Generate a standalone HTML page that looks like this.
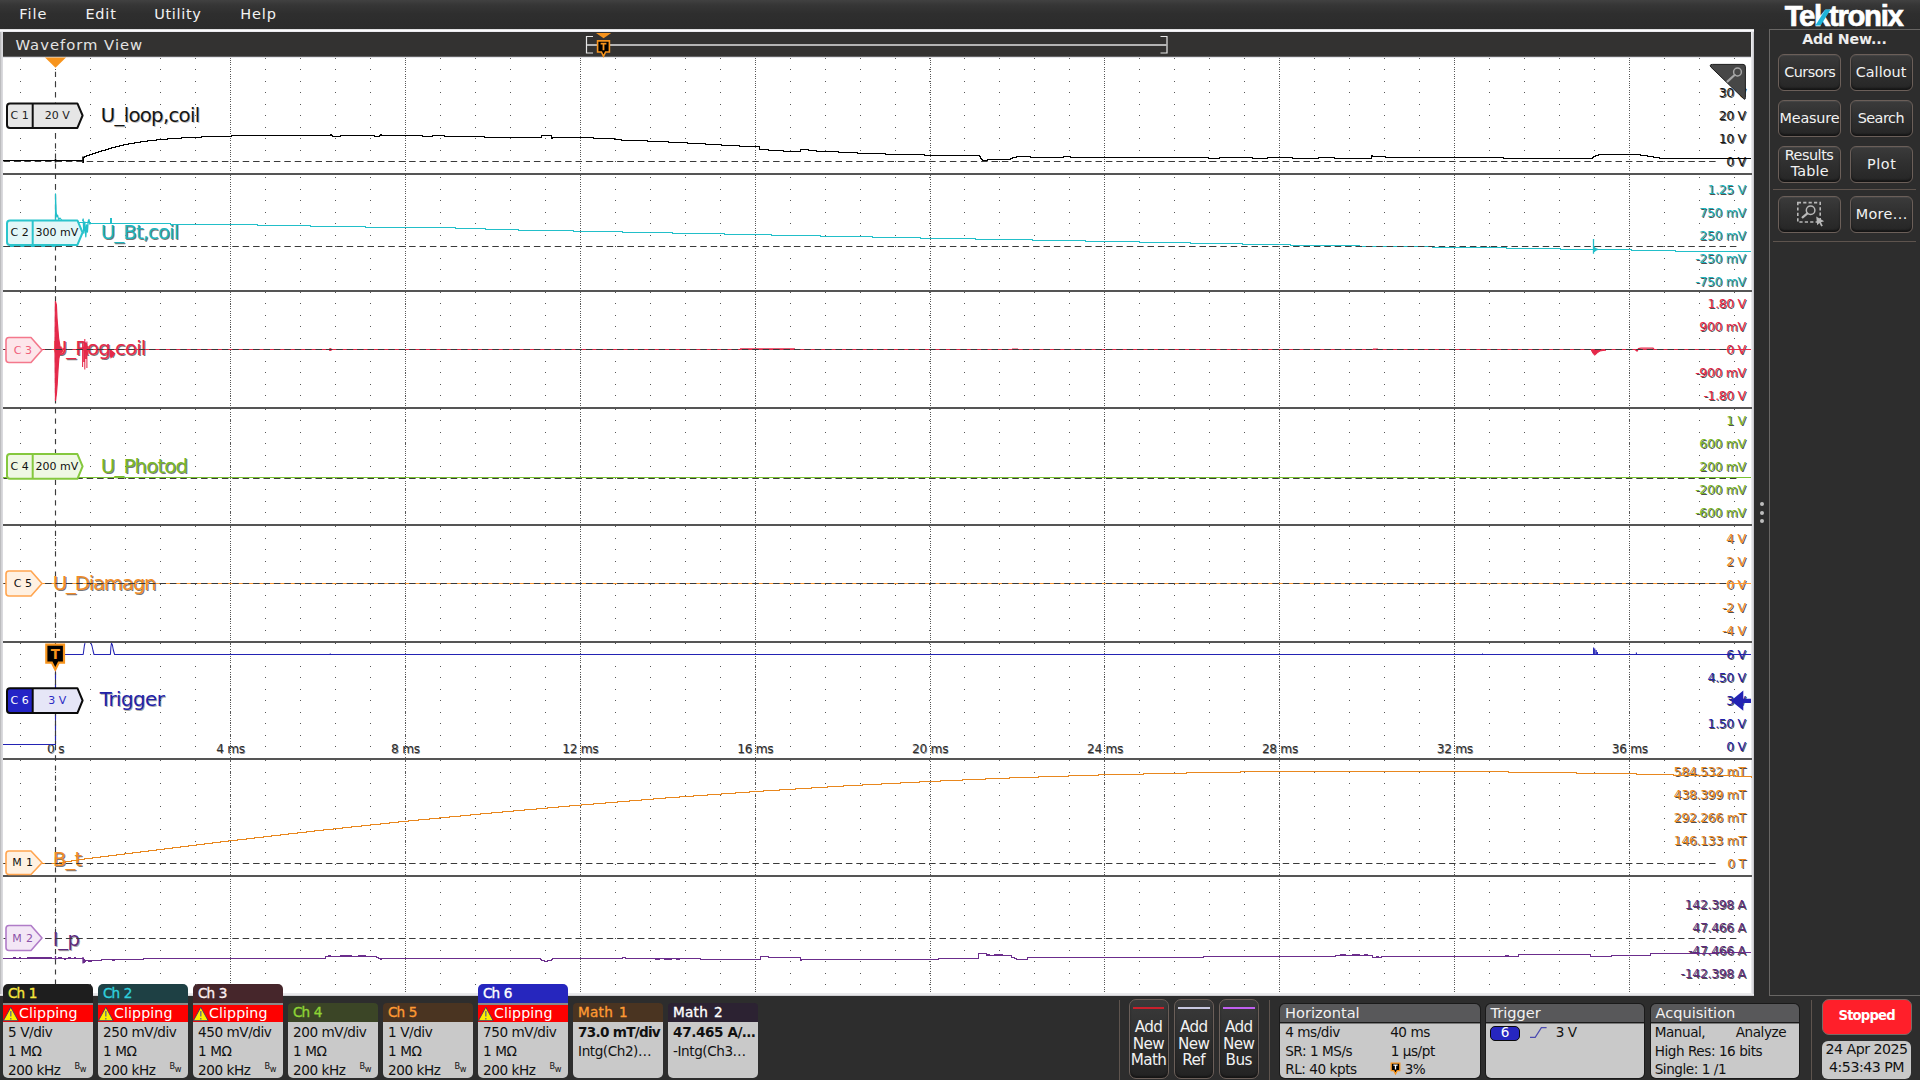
<!DOCTYPE html>
<html lang="en"><head><meta charset="utf-8"><title>Tektronix Waveform View</title>
<style>
html,body{margin:0;padding:0}
body{width:1920px;height:1080px;overflow:hidden;background:#2d2d2d;position:relative;font-family:"DejaVu Sans","Liberation Sans",sans-serif;}
#app{position:absolute;left:0;top:0;width:1920px;height:1080px;overflow:hidden;background:#2d2d2d}
#app div{position:absolute}
.t{position:absolute;white-space:pre;line-height:1}
svg.layer{position:absolute;left:0;top:0}
#menubar{left:0;top:0;width:1920px;height:29px;background:linear-gradient(#414141 0,#363636 5px,#2e2e2e 14px,#2c2c2c 100%)}
#wvframe{left:0;top:29px;width:1754.3px;height:967px;background:linear-gradient(#cfcfd1 0,#fdfdfd 1.3px,#e4e4ea 3px,#e0e0e4 964px,#f4f4f6 965px,#c4c4c8 967px)}
#wvl{left:0;top:32px;width:3px;height:962px;background:linear-gradient(90deg,#a9a9ab 0,#cfcfd2 1px,#dedee2 3px)}
#wvr{left:1751px;top:32px;width:3.3px;height:962px;background:linear-gradient(90deg,#f0f0f2 0,#dcdce0 1.6px,#b8b8bc 3.3px)}
#wvtitle{left:3px;top:32px;width:1748px;height:24.3px;background:#333231;border-bottom:1.5px solid #626262}
#wvgrid{left:3px;top:57.7px;width:1748px;height:935.6px;background:#fff}
#rpanel{left:1769px;top:29px;width:160px;height:967.3px;border:1px solid #686664;box-sizing:border-box}
</style></head>
<body><div id="app">
<div id="menubar"></div>
<div id="wvframe"></div><div id="wvl"></div><div id="wvr"></div><div id="wvtitle"></div><div id="wvgrid"></div>
<div id="rpanel"></div>
<svg class="layer" width="1920" height="1080" viewBox="0 0 1920 1080">
<path d="M20 58.5H1751" stroke="#585858" stroke-width="1" stroke-dasharray="1 33.98" shape-rendering="crispEdges"/>
<path d="M20 69.5H1751" stroke="#585858" stroke-width="1" stroke-dasharray="1 33.98" shape-rendering="crispEdges"/>
<path d="M20 81.5H1751" stroke="#585858" stroke-width="1" stroke-dasharray="1 33.98" shape-rendering="crispEdges"/>
<path d="M20 92.5H1751" stroke="#585858" stroke-width="1" stroke-dasharray="1 33.98" shape-rendering="crispEdges"/>
<path d="M20 104.5H1751" stroke="#585858" stroke-width="1" stroke-dasharray="1 33.98" shape-rendering="crispEdges"/>
<path d="M20 115.5H1751" stroke="#585858" stroke-width="1" stroke-dasharray="1 33.98" shape-rendering="crispEdges"/>
<path d="M20 127.5H1751" stroke="#585858" stroke-width="1" stroke-dasharray="1 33.98" shape-rendering="crispEdges"/>
<path d="M20 138.5H1751" stroke="#585858" stroke-width="1" stroke-dasharray="1 33.98" shape-rendering="crispEdges"/>
<path d="M20 150.5H1751" stroke="#585858" stroke-width="1" stroke-dasharray="1 33.98" shape-rendering="crispEdges"/>
<path d="M20 161.5H1751" stroke="#585858" stroke-width="1" stroke-dasharray="1 33.98" shape-rendering="crispEdges"/>
<path d="M20 177.5H1751" stroke="#585858" stroke-width="1" stroke-dasharray="1 33.98" shape-rendering="crispEdges"/>
<path d="M20 189.5H1751" stroke="#585858" stroke-width="1" stroke-dasharray="1 33.98" shape-rendering="crispEdges"/>
<path d="M20 200.5H1751" stroke="#585858" stroke-width="1" stroke-dasharray="1 33.98" shape-rendering="crispEdges"/>
<path d="M20 212.5H1751" stroke="#585858" stroke-width="1" stroke-dasharray="1 33.98" shape-rendering="crispEdges"/>
<path d="M20 223.5H1751" stroke="#585858" stroke-width="1" stroke-dasharray="1 33.98" shape-rendering="crispEdges"/>
<path d="M20 235.5H1751" stroke="#585858" stroke-width="1" stroke-dasharray="1 33.98" shape-rendering="crispEdges"/>
<path d="M20 246.5H1751" stroke="#585858" stroke-width="1" stroke-dasharray="1 33.98" shape-rendering="crispEdges"/>
<path d="M20 258.5H1751" stroke="#585858" stroke-width="1" stroke-dasharray="1 33.98" shape-rendering="crispEdges"/>
<path d="M20 269.5H1751" stroke="#585858" stroke-width="1" stroke-dasharray="1 33.98" shape-rendering="crispEdges"/>
<path d="M20 281.5H1751" stroke="#585858" stroke-width="1" stroke-dasharray="1 33.98" shape-rendering="crispEdges"/>
<path d="M20 292.5H1751" stroke="#585858" stroke-width="1" stroke-dasharray="1 33.98" shape-rendering="crispEdges"/>
<path d="M20 303.5H1751" stroke="#585858" stroke-width="1" stroke-dasharray="1 33.98" shape-rendering="crispEdges"/>
<path d="M20 315.5H1751" stroke="#585858" stroke-width="1" stroke-dasharray="1 33.98" shape-rendering="crispEdges"/>
<path d="M20 326.5H1751" stroke="#585858" stroke-width="1" stroke-dasharray="1 33.98" shape-rendering="crispEdges"/>
<path d="M20 338.5H1751" stroke="#585858" stroke-width="1" stroke-dasharray="1 33.98" shape-rendering="crispEdges"/>
<path d="M20 349.5H1751" stroke="#585858" stroke-width="1" stroke-dasharray="1 33.98" shape-rendering="crispEdges"/>
<path d="M20 361.5H1751" stroke="#585858" stroke-width="1" stroke-dasharray="1 33.98" shape-rendering="crispEdges"/>
<path d="M20 372.5H1751" stroke="#585858" stroke-width="1" stroke-dasharray="1 33.98" shape-rendering="crispEdges"/>
<path d="M20 384.5H1751" stroke="#585858" stroke-width="1" stroke-dasharray="1 33.98" shape-rendering="crispEdges"/>
<path d="M20 395.5H1751" stroke="#585858" stroke-width="1" stroke-dasharray="1 33.98" shape-rendering="crispEdges"/>
<path d="M20 409.5H1751" stroke="#585858" stroke-width="1" stroke-dasharray="1 33.98" shape-rendering="crispEdges"/>
<path d="M20 420.5H1751" stroke="#585858" stroke-width="1" stroke-dasharray="1 33.98" shape-rendering="crispEdges"/>
<path d="M20 432.5H1751" stroke="#585858" stroke-width="1" stroke-dasharray="1 33.98" shape-rendering="crispEdges"/>
<path d="M20 443.5H1751" stroke="#585858" stroke-width="1" stroke-dasharray="1 33.98" shape-rendering="crispEdges"/>
<path d="M20 455.5H1751" stroke="#585858" stroke-width="1" stroke-dasharray="1 33.98" shape-rendering="crispEdges"/>
<path d="M20 466.5H1751" stroke="#585858" stroke-width="1" stroke-dasharray="1 33.98" shape-rendering="crispEdges"/>
<path d="M20 478.5H1751" stroke="#585858" stroke-width="1" stroke-dasharray="1 33.98" shape-rendering="crispEdges"/>
<path d="M20 489.5H1751" stroke="#585858" stroke-width="1" stroke-dasharray="1 33.98" shape-rendering="crispEdges"/>
<path d="M20 501.5H1751" stroke="#585858" stroke-width="1" stroke-dasharray="1 33.98" shape-rendering="crispEdges"/>
<path d="M20 512.5H1751" stroke="#585858" stroke-width="1" stroke-dasharray="1 33.98" shape-rendering="crispEdges"/>
<path d="M20 526.5H1751" stroke="#585858" stroke-width="1" stroke-dasharray="1 33.98" shape-rendering="crispEdges"/>
<path d="M20 538.5H1751" stroke="#585858" stroke-width="1" stroke-dasharray="1 33.98" shape-rendering="crispEdges"/>
<path d="M20 549.5H1751" stroke="#585858" stroke-width="1" stroke-dasharray="1 33.98" shape-rendering="crispEdges"/>
<path d="M20 561.5H1751" stroke="#585858" stroke-width="1" stroke-dasharray="1 33.98" shape-rendering="crispEdges"/>
<path d="M20 572.5H1751" stroke="#585858" stroke-width="1" stroke-dasharray="1 33.98" shape-rendering="crispEdges"/>
<path d="M20 584.5H1751" stroke="#585858" stroke-width="1" stroke-dasharray="1 33.98" shape-rendering="crispEdges"/>
<path d="M20 595.5H1751" stroke="#585858" stroke-width="1" stroke-dasharray="1 33.98" shape-rendering="crispEdges"/>
<path d="M20 607.5H1751" stroke="#585858" stroke-width="1" stroke-dasharray="1 33.98" shape-rendering="crispEdges"/>
<path d="M20 618.5H1751" stroke="#585858" stroke-width="1" stroke-dasharray="1 33.98" shape-rendering="crispEdges"/>
<path d="M20 630.5H1751" stroke="#585858" stroke-width="1" stroke-dasharray="1 33.98" shape-rendering="crispEdges"/>
<path d="M20 643.5H1751" stroke="#585858" stroke-width="1" stroke-dasharray="1 33.98" shape-rendering="crispEdges"/>
<path d="M20 654.5H1751" stroke="#585858" stroke-width="1" stroke-dasharray="1 33.98" shape-rendering="crispEdges"/>
<path d="M20 666.5H1751" stroke="#585858" stroke-width="1" stroke-dasharray="1 33.98" shape-rendering="crispEdges"/>
<path d="M20 677.5H1751" stroke="#585858" stroke-width="1" stroke-dasharray="1 33.98" shape-rendering="crispEdges"/>
<path d="M20 689.5H1751" stroke="#585858" stroke-width="1" stroke-dasharray="1 33.98" shape-rendering="crispEdges"/>
<path d="M20 700.5H1751" stroke="#585858" stroke-width="1" stroke-dasharray="1 33.98" shape-rendering="crispEdges"/>
<path d="M20 712.5H1751" stroke="#585858" stroke-width="1" stroke-dasharray="1 33.98" shape-rendering="crispEdges"/>
<path d="M20 723.5H1751" stroke="#585858" stroke-width="1" stroke-dasharray="1 33.98" shape-rendering="crispEdges"/>
<path d="M20 735.5H1751" stroke="#585858" stroke-width="1" stroke-dasharray="1 33.98" shape-rendering="crispEdges"/>
<path d="M20 746.5H1751" stroke="#585858" stroke-width="1" stroke-dasharray="1 33.98" shape-rendering="crispEdges"/>
<path d="M20 760.5H1751" stroke="#585858" stroke-width="1" stroke-dasharray="1 33.98" shape-rendering="crispEdges"/>
<path d="M20 772.5H1751" stroke="#585858" stroke-width="1" stroke-dasharray="1 33.98" shape-rendering="crispEdges"/>
<path d="M20 783.5H1751" stroke="#585858" stroke-width="1" stroke-dasharray="1 33.98" shape-rendering="crispEdges"/>
<path d="M20 795.5H1751" stroke="#585858" stroke-width="1" stroke-dasharray="1 33.98" shape-rendering="crispEdges"/>
<path d="M20 806.5H1751" stroke="#585858" stroke-width="1" stroke-dasharray="1 33.98" shape-rendering="crispEdges"/>
<path d="M20 818.5H1751" stroke="#585858" stroke-width="1" stroke-dasharray="1 33.98" shape-rendering="crispEdges"/>
<path d="M20 829.5H1751" stroke="#585858" stroke-width="1" stroke-dasharray="1 33.98" shape-rendering="crispEdges"/>
<path d="M20 841.5H1751" stroke="#585858" stroke-width="1" stroke-dasharray="1 33.98" shape-rendering="crispEdges"/>
<path d="M20 852.5H1751" stroke="#585858" stroke-width="1" stroke-dasharray="1 33.98" shape-rendering="crispEdges"/>
<path d="M20 864.5H1751" stroke="#585858" stroke-width="1" stroke-dasharray="1 33.98" shape-rendering="crispEdges"/>
<path d="M20 881.5H1751" stroke="#585858" stroke-width="1" stroke-dasharray="1 33.98" shape-rendering="crispEdges"/>
<path d="M20 892.5H1751" stroke="#585858" stroke-width="1" stroke-dasharray="1 33.98" shape-rendering="crispEdges"/>
<path d="M20 904.5H1751" stroke="#585858" stroke-width="1" stroke-dasharray="1 33.98" shape-rendering="crispEdges"/>
<path d="M20 915.5H1751" stroke="#585858" stroke-width="1" stroke-dasharray="1 33.98" shape-rendering="crispEdges"/>
<path d="M20 927.5H1751" stroke="#585858" stroke-width="1" stroke-dasharray="1 33.98" shape-rendering="crispEdges"/>
<path d="M20 938.5H1751" stroke="#585858" stroke-width="1" stroke-dasharray="1 33.98" shape-rendering="crispEdges"/>
<path d="M20 950.5H1751" stroke="#585858" stroke-width="1" stroke-dasharray="1 33.98" shape-rendering="crispEdges"/>
<path d="M20 961.5H1751" stroke="#585858" stroke-width="1" stroke-dasharray="1 33.98" shape-rendering="crispEdges"/>
<path d="M20 973.5H1751" stroke="#585858" stroke-width="1" stroke-dasharray="1 33.98" shape-rendering="crispEdges"/>
<path d="M20 984.5H1751" stroke="#585858" stroke-width="1" stroke-dasharray="1 33.98" shape-rendering="crispEdges"/>
<path d="M230.40 57.5V993.5" stroke="#585858" stroke-width="1" stroke-dasharray="1 1.3" shape-rendering="crispEdges"/>
<path d="M405.30 57.5V993.5" stroke="#585858" stroke-width="1" stroke-dasharray="1 1.3" shape-rendering="crispEdges"/>
<path d="M580.20 57.5V993.5" stroke="#585858" stroke-width="1" stroke-dasharray="1 1.3" shape-rendering="crispEdges"/>
<path d="M755.10 57.5V993.5" stroke="#585858" stroke-width="1" stroke-dasharray="1 1.3" shape-rendering="crispEdges"/>
<path d="M930.00 57.5V993.5" stroke="#585858" stroke-width="1" stroke-dasharray="1 1.3" shape-rendering="crispEdges"/>
<path d="M1104.90 57.5V993.5" stroke="#585858" stroke-width="1" stroke-dasharray="1 1.3" shape-rendering="crispEdges"/>
<path d="M1279.80 57.5V993.5" stroke="#585858" stroke-width="1" stroke-dasharray="1 1.3" shape-rendering="crispEdges"/>
<path d="M1454.70 57.5V993.5" stroke="#585858" stroke-width="1" stroke-dasharray="1 1.3" shape-rendering="crispEdges"/>
<path d="M1629.60 57.5V993.5" stroke="#585858" stroke-width="1" stroke-dasharray="1 1.3" shape-rendering="crispEdges"/>
<rect x="3" y="173" width="1749" height="2" fill="#555"/>
<rect x="3" y="290" width="1749" height="2" fill="#555"/>
<rect x="3" y="407" width="1749" height="2" fill="#555"/>
<rect x="3" y="524" width="1749" height="2" fill="#555"/>
<rect x="3" y="641" width="1749" height="2" fill="#555"/>
<rect x="3" y="758" width="1749" height="2" fill="#555"/>
<rect x="3" y="875" width="1749" height="2" fill="#555"/>
<path d="M55.5 67.6V993" stroke="#3c3c3c" stroke-width="1.15" stroke-dasharray="5.2 5" stroke-dashoffset="6"/>
</svg>
<span class="t" style="left:100.81px;top:105.50px;font-size:19.8px;color:#151515;letter-spacing:-0.751px;text-shadow:1px 1px 0 rgba(0,0,0,.25);">U_loop,coil</span>
<span class="t" style="left:100.81px;top:222.75px;font-size:19.8px;color:#1fb5bd;letter-spacing:-0.949px;text-shadow:1px 1px 0 rgba(0,0,0,.55);">U_Bt,coil</span>
<span class="t" style="left:52.81px;top:339.00px;font-size:19.8px;color:#e5294a;letter-spacing:-0.976px;text-shadow:1px 1px 0 rgba(0,0,0,.55);">U_Rog,coil</span>
<span class="t" style="left:100.81px;top:456.50px;font-size:19.8px;color:#78b82a;letter-spacing:-0.855px;text-shadow:1px 1px 0 rgba(0,0,0,.55);">U_Photod</span>
<span class="t" style="left:52.81px;top:574.00px;font-size:19.8px;color:#f08c28;letter-spacing:-1.230px;text-shadow:1px 1px 0 rgba(0,0,0,.55);">U_Diamagn</span>
<span class="t" style="left:99.81px;top:690.00px;font-size:19.8px;color:#2222a8;letter-spacing:-0.526px;text-shadow:1px 1px 0 rgba(0,0,0,.35);">Trigger</span>
<span class="t" style="left:52.81px;top:849.75px;font-size:19.8px;color:#f08c28;letter-spacing:-0.921px;text-shadow:1px 1px 0 rgba(0,0,0,.55);">B_t</span>
<span class="t" style="left:52.81px;top:930.00px;font-size:19.8px;color:#5c2a7c;letter-spacing:-0.453px;text-shadow:1px 1px 0 rgba(0,0,0,.35);">I_p</span>
<span class="t" style="left:1718.76px;top:86.95px;font-size:12.5px;color:#151515;letter-spacing:-0.350px;text-shadow:1px 1px 0 rgba(0,0,0,.7);background:#fff;">30 V</span>
<span class="t" style="left:1718.76px;top:109.95px;font-size:12.5px;color:#151515;letter-spacing:-0.350px;text-shadow:1px 1px 0 rgba(0,0,0,.7);background:#fff;">20 V</span>
<span class="t" style="left:1718.76px;top:132.95px;font-size:12.5px;color:#151515;letter-spacing:-0.350px;text-shadow:1px 1px 0 rgba(0,0,0,.7);background:#fff;">10 V</span>
<span class="t" style="left:1726.37px;top:155.95px;font-size:12.5px;color:#151515;letter-spacing:-0.350px;text-shadow:1px 1px 0 rgba(0,0,0,.7);background:#fff;">0 V</span>
<span class="t" style="left:1707.54px;top:183.70px;font-size:12.5px;color:#1fb5bd;letter-spacing:-0.350px;text-shadow:1px 1px 0 rgba(0,0,0,.7);background:#fff;">1.25 V</span>
<span class="t" style="left:1699.34px;top:206.70px;font-size:12.5px;color:#1fb5bd;letter-spacing:-0.350px;text-shadow:1px 1px 0 rgba(0,0,0,.7);background:#fff;">750 mV</span>
<span class="t" style="left:1699.34px;top:229.70px;font-size:12.5px;color:#1fb5bd;letter-spacing:-0.350px;text-shadow:1px 1px 0 rgba(0,0,0,.7);background:#fff;">250 mV</span>
<span class="t" style="left:1695.17px;top:252.70px;font-size:12.5px;color:#1fb5bd;letter-spacing:-0.350px;text-shadow:1px 1px 0 rgba(0,0,0,.7);background:#fff;">-250 mV</span>
<span class="t" style="left:1695.17px;top:275.70px;font-size:12.5px;color:#1fb5bd;letter-spacing:-0.350px;text-shadow:1px 1px 0 rgba(0,0,0,.7);background:#fff;">-750 mV</span>
<span class="t" style="left:1707.54px;top:298.20px;font-size:12.5px;color:#e5294a;letter-spacing:-0.350px;text-shadow:1px 1px 0 rgba(0,0,0,.7);background:#fff;">1.80 V</span>
<span class="t" style="left:1699.34px;top:321.20px;font-size:12.5px;color:#e5294a;letter-spacing:-0.350px;text-shadow:1px 1px 0 rgba(0,0,0,.7);background:#fff;">900 mV</span>
<span class="t" style="left:1726.37px;top:344.20px;font-size:12.5px;color:#e5294a;letter-spacing:-0.350px;text-shadow:1px 1px 0 rgba(0,0,0,.7);background:#fff;">0 V</span>
<span class="t" style="left:1695.17px;top:367.20px;font-size:12.5px;color:#e5294a;letter-spacing:-0.350px;text-shadow:1px 1px 0 rgba(0,0,0,.7);background:#fff;">-900 mV</span>
<span class="t" style="left:1703.38px;top:390.20px;font-size:12.5px;color:#e5294a;letter-spacing:-0.350px;text-shadow:1px 1px 0 rgba(0,0,0,.7);background:#fff;">-1.80 V</span>
<span class="t" style="left:1726.37px;top:415.20px;font-size:12.5px;color:#7ab82a;letter-spacing:-0.350px;text-shadow:1px 1px 0 rgba(0,0,0,.7);background:#fff;">1 V</span>
<span class="t" style="left:1699.34px;top:438.20px;font-size:12.5px;color:#7ab82a;letter-spacing:-0.350px;text-shadow:1px 1px 0 rgba(0,0,0,.7);background:#fff;">600 mV</span>
<span class="t" style="left:1699.34px;top:461.20px;font-size:12.5px;color:#7ab82a;letter-spacing:-0.350px;text-shadow:1px 1px 0 rgba(0,0,0,.7);background:#fff;">200 mV</span>
<span class="t" style="left:1695.17px;top:484.20px;font-size:12.5px;color:#7ab82a;letter-spacing:-0.350px;text-shadow:1px 1px 0 rgba(0,0,0,.7);background:#fff;">-200 mV</span>
<span class="t" style="left:1695.17px;top:507.20px;font-size:12.5px;color:#7ab82a;letter-spacing:-0.350px;text-shadow:1px 1px 0 rgba(0,0,0,.7);background:#fff;">-600 mV</span>
<span class="t" style="left:1726.37px;top:533.10px;font-size:12.5px;color:#f08c28;letter-spacing:-0.350px;text-shadow:1px 1px 0 rgba(0,0,0,.7);background:#fff;">4 V</span>
<span class="t" style="left:1726.37px;top:556.10px;font-size:12.5px;color:#f08c28;letter-spacing:-0.350px;text-shadow:1px 1px 0 rgba(0,0,0,.7);background:#fff;">2 V</span>
<span class="t" style="left:1726.37px;top:579.10px;font-size:12.5px;color:#f08c28;letter-spacing:-0.350px;text-shadow:1px 1px 0 rgba(0,0,0,.7);background:#fff;">0 V</span>
<span class="t" style="left:1722.20px;top:602.10px;font-size:12.5px;color:#f08c28;letter-spacing:-0.350px;text-shadow:1px 1px 0 rgba(0,0,0,.7);background:#fff;">-2 V</span>
<span class="t" style="left:1722.20px;top:625.10px;font-size:12.5px;color:#f08c28;letter-spacing:-0.350px;text-shadow:1px 1px 0 rgba(0,0,0,.7);background:#fff;">-4 V</span>
<span class="t" style="left:1726.37px;top:649.30px;font-size:12.5px;color:#2222a8;letter-spacing:-0.350px;text-shadow:1px 1px 0 rgba(0,0,0,.7);background:#fff;">6 V</span>
<span class="t" style="left:1707.54px;top:672.30px;font-size:12.5px;color:#2222a8;letter-spacing:-0.350px;text-shadow:1px 1px 0 rgba(0,0,0,.7);background:#fff;">4.50 V</span>
<span class="t" style="left:1726.37px;top:695.30px;font-size:12.5px;color:#2222a8;letter-spacing:-0.350px;text-shadow:1px 1px 0 rgba(0,0,0,.7);background:#fff;">3 V</span>
<span class="t" style="left:1707.54px;top:718.30px;font-size:12.5px;color:#2222a8;letter-spacing:-0.350px;text-shadow:1px 1px 0 rgba(0,0,0,.7);background:#fff;">1.50 V</span>
<span class="t" style="left:1726.37px;top:741.30px;font-size:12.5px;color:#2222a8;letter-spacing:-0.350px;text-shadow:1px 1px 0 rgba(0,0,0,.7);background:#fff;">0 V</span>
<span class="t" style="left:1673.82px;top:766.45px;font-size:12.5px;color:#e8871e;letter-spacing:-0.350px;text-shadow:1px 1px 0 rgba(0,0,0,.7);background:#fff;">584.532 mT</span>
<span class="t" style="left:1673.82px;top:789.45px;font-size:12.5px;color:#e8871e;letter-spacing:-0.350px;text-shadow:1px 1px 0 rgba(0,0,0,.7);background:#fff;">438.399 mT</span>
<span class="t" style="left:1673.82px;top:812.45px;font-size:12.5px;color:#e8871e;letter-spacing:-0.350px;text-shadow:1px 1px 0 rgba(0,0,0,.7);background:#fff;">292.266 mT</span>
<span class="t" style="left:1673.82px;top:835.45px;font-size:12.5px;color:#e8871e;letter-spacing:-0.350px;text-shadow:1px 1px 0 rgba(0,0,0,.7);background:#fff;">146.133 mT</span>
<span class="t" style="left:1727.29px;top:858.45px;font-size:12.5px;color:#e8871e;letter-spacing:-0.350px;text-shadow:1px 1px 0 rgba(0,0,0,.7);background:#fff;">0 T</span>
<span class="t" style="left:1684.73px;top:899.45px;font-size:12.5px;color:#5c2a7c;letter-spacing:-0.350px;text-shadow:1px 1px 0 rgba(0,0,0,.7);background:#fff;">142.398 A</span>
<span class="t" style="left:1692.33px;top:922.45px;font-size:12.5px;color:#5c2a7c;letter-spacing:-0.350px;text-shadow:1px 1px 0 rgba(0,0,0,.7);background:#fff;">47.466 A</span>
<span class="t" style="left:1688.17px;top:945.45px;font-size:12.5px;color:#5c2a7c;letter-spacing:-0.350px;text-shadow:1px 1px 0 rgba(0,0,0,.7);background:#fff;">-47.466 A</span>
<span class="t" style="left:1680.57px;top:968.45px;font-size:12.5px;color:#5c2a7c;letter-spacing:-0.350px;text-shadow:1px 1px 0 rgba(0,0,0,.7);background:#fff;">-142.398 A</span>
<span class="t" style="left:47.11px;top:742.50px;font-size:12.2px;color:#2e2e2e;letter-spacing:-0.300px;text-shadow:0.6px 0.6px 0 rgba(0,0,0,.45);">0 s</span>
<span class="t" style="left:216.22px;top:742.50px;font-size:12.2px;color:#2e2e2e;letter-spacing:-0.300px;text-shadow:0.6px 0.6px 0 rgba(0,0,0,.45);">4 ms</span>
<span class="t" style="left:391.12px;top:742.50px;font-size:12.2px;color:#2e2e2e;letter-spacing:-0.300px;text-shadow:0.6px 0.6px 0 rgba(0,0,0,.45);">8 ms</span>
<span class="t" style="left:562.30px;top:742.50px;font-size:12.2px;color:#2e2e2e;letter-spacing:-0.300px;text-shadow:0.6px 0.6px 0 rgba(0,0,0,.45);">12 ms</span>
<span class="t" style="left:737.20px;top:742.50px;font-size:12.2px;color:#2e2e2e;letter-spacing:-0.300px;text-shadow:0.6px 0.6px 0 rgba(0,0,0,.45);">16 ms</span>
<span class="t" style="left:912.10px;top:742.50px;font-size:12.2px;color:#2e2e2e;letter-spacing:-0.300px;text-shadow:0.6px 0.6px 0 rgba(0,0,0,.45);">20 ms</span>
<span class="t" style="left:1087.00px;top:742.50px;font-size:12.2px;color:#2e2e2e;letter-spacing:-0.300px;text-shadow:0.6px 0.6px 0 rgba(0,0,0,.45);">24 ms</span>
<span class="t" style="left:1261.90px;top:742.50px;font-size:12.2px;color:#2e2e2e;letter-spacing:-0.300px;text-shadow:0.6px 0.6px 0 rgba(0,0,0,.45);">28 ms</span>
<span class="t" style="left:1436.80px;top:742.50px;font-size:12.2px;color:#2e2e2e;letter-spacing:-0.300px;text-shadow:0.6px 0.6px 0 rgba(0,0,0,.45);">32 ms</span>
<span class="t" style="left:1611.70px;top:742.50px;font-size:12.2px;color:#2e2e2e;letter-spacing:-0.300px;text-shadow:0.6px 0.6px 0 rgba(0,0,0,.45);">36 ms</span>
<svg class="layer" width="1920" height="1080" viewBox="0 0 1920 1080">
<path d="M3.0 160.50H83.0V162.50H83.5V157.50H84.6V156.50H86.9V155.50H89.0V154.50H92.0V153.50H95.0V152.50H98.0V151.50H101.0V150.50H105.0V149.50H108.0V148.50H111.0V147.50H115.0V146.50H119.0V145.50H123.0V144.50H128.0V143.50H134.0V142.50H140.0V141.50H147.0V140.50H156.0V139.50H167.0V138.50H181.0V137.50H201.0V136.50H231.0V135.50H330.0V134.50H331.0V135.50H332.0V136.50H340.0V135.50H374.0V136.50H379.0V135.50H380.0V134.50H381.0V135.50H422.0V136.50H432.0V135.50H444.0V136.50H484.0V137.50H541.0V135.50H551.0V138.50H552.0V137.50H593.0V138.50H614.0V139.50H621.0V140.50H647.0V141.50H668.0V142.50H687.0V143.50H705.0V144.50H721.0V145.50H739.0V146.50H759.5V149.50H768.8V150.50H783.0V151.50H800.0V149.50H808.0V150.50H816.0V151.50H838.0V152.50H857.0V153.50H885.0V154.50H924.0V155.50H979.0V156.50H980.0V158.50H981.0V159.50H982.0V160.50H987.0V159.50H1010.0V158.50H1012.0V157.50H1016.0V156.50H1030.0V157.50H1063.0V156.50H1070.0V157.50H1208.0V158.50H1219.0V157.50H1252.0V158.50H1267.0V157.50H1292.0V158.50H1318.0V157.50H1334.0V158.50H1371.0V155.50H1372.0V156.50H1385.0V157.50H1503.0V158.50H1592.0V157.50H1593.0V156.50H1595.0V155.50H1598.0V154.50H1640.0V155.50H1647.0V156.50H1653.0V157.50H1659.3V158.50H1751.0" fill="none" stroke="#000" stroke-width="1" shape-rendering="crispEdges"/>
<path d="M55.5 158.8V162.4M83 156.5V163" stroke="#000" stroke-width="1.6"/>
<path d="M3 246.5H55" fill="none" stroke="#22bfc9" stroke-width="1.1"/>
<path d="M58.0 220.50H66.0V221.50H78.0V222.50H90.0V223.50H110.0V218.50H111.0V223.50H170.0V224.50H257.0V225.50H310.0V226.50H365.0V227.50H455.0V228.50H485.0V229.50H518.0V230.50H573.0V231.50H622.0V232.50H672.0V233.50H724.0V234.50H771.0V235.50H820.0V236.50H872.0V237.50H920.0V238.50H975.0V239.50H1032.0V240.50H1085.0V241.50H1139.0V242.50H1190.0V243.50H1242.0V244.50H1290.0V245.50H1359.0V246.50H1432.0V247.50H1506.0V248.50H1560.0V249.50H1631.0V250.50H1675.0V251.50H1751.0" fill="none" stroke="#22bfc9" stroke-width="1" shape-rendering="crispEdges"/>
<path d="M55.5 246.5V193.8L56.2 212L56.8 217L57.6 215L58.6 219.5L60 218L62 220.5" fill="none" stroke="#22bfc9" stroke-width="1.15" stroke-linejoin="round"/>
<path d="M82.6 221L83.2 219L83.8 233L84.8 222L85.8 236.8L86.6 225L87.4 232L88.2 221L89 219.5L89.8 224L91 223" fill="none" stroke="#22bfc9" stroke-width="1.3" stroke-linejoin="round"/>
<path d="M1593.5 239V253.8M1594.6 246.5V252M1595.8 248V251M1597 248.6V250.2" fill="none" stroke="#22bfc9" stroke-width="1.3"/>
<path d="M3 349.5H1751" stroke="#e5294a" stroke-width="1.15"/>
<path d="M55 349.5L55.4 301.5L56.4 305L57 318L57.8 328L58.6 338L59.6 344L60.4 349.5L59.8 354L58.8 359L58 370L57.2 384L56.4 394L55.5 400.5Z" fill="#e5294a" stroke="#e5294a" stroke-width="1.2" stroke-linejoin="round"/>
<path d="M59.5 347.5Q62.5 348.5 62.8 351.5Q62 354 59.5 354Z" fill="#e5294a"/>
<path d="M60 349.5L61 346.5L62 352L63 348.5L64.5 349.5" stroke="#e5294a" stroke-width="1.2" fill="none"/>
<path d="M82.6 341V367M83.8 344V362M84.8 339V369.5M85.9 343V359M86.9 341.5V368M88 346V354" fill="none" stroke="#e5294a" stroke-width="1.05"/>
<path d="M109.6 349.5L110.4 349L115.4 353.6L110.8 358.8L109.8 356Z" fill="#e5294a"/>
<circle cx="330.3" cy="349.5" r="1.6" fill="#e5294a"/>
<path d="M740 349.1H795M1012 349.2H1018M1373 349.2H1378" stroke="#e5294a" stroke-width="1.6"/>
<path d="M1591 349.5L1593 353.5L1595 355.3L1597 353L1600 351L1606 350Z" fill="#e5294a" stroke="#e5294a" stroke-width="1"/>
<path d="M1635 349.5L1637 351L1638.5 348.6L1641 348.2H1653L1654 349.5" fill="none" stroke="#e5294a" stroke-width="1.3"/>
<path d="M3 477.5H1751" stroke="#7ac231" stroke-width="1.2"/>
<path d="M3 583.5H1751" stroke="#ff9a33" stroke-width="1.2"/>
<circle cx="1849.5" cy="583" r="0"/>
<path d="M3 744.5H55.5V654.5H65 M65 654.5H83.2L83.8 650L84.4 645.5L85 643.2 M91 643.2L92 646L93 650.5L94 654.5H110.4L110.9 647L111.5 643.2L112.4 645L113.3 650L114.6 654.5H1751" fill="none" stroke="#2323b4" stroke-width="1.05" stroke-linejoin="round"/>
<path d="M330.3 653.6V654.5M1482.5 653.4V654.5M1593.6 647.6V654.5M1594.8 648.5V654.5M1596.2 650V654.5M1597.4 652V654.5M1636.4 652.6V654.5" stroke="#2323b4" stroke-width="1.1"/>
<path d="M3 863.5H55.5" stroke="#e8871e" stroke-width="1.1"/>
<path d="M55.5 863.50H59.6V862.50H65.7V861.50H71.8V860.50H78.0V859.50H84.0V858.50H92.0V857.50H100.0V856.50H108.0V855.50H116.0V854.50H124.0V853.50H132.0V852.50H140.0V851.50H148.0V850.50H156.0V849.50H164.0V848.50H172.0V847.50H180.0V846.50H188.0V845.50H196.0V844.50H204.0V843.50H212.0V842.50H220.0V841.50H228.0V840.50H237.0V839.50H246.0V838.50H254.0V837.50H263.0V836.50H271.0V835.50H280.0V834.50H288.0V833.50H297.0V832.50H306.0V831.50H314.0V830.50H323.0V829.50H333.0V828.50H342.0V827.50H351.0V826.50H361.0V825.50H370.0V824.50H380.0V823.50H389.0V822.50H398.0V821.50H408.0V820.50H418.0V819.50H429.0V818.50H439.0V817.50H449.0V816.50H460.0V815.50H470.0V814.50H480.0V813.50H491.0V812.50H502.0V811.50H513.0V810.50H524.0V809.50H536.0V808.50H547.0V807.50H558.0V806.50H569.0V805.50H581.0V804.50H593.0V803.50H605.0V802.50H617.0V801.50H629.0V800.50H641.0V799.50H653.0V798.50H665.0V797.50H679.0V796.50H693.0V795.50H707.0V794.50H721.0V793.50H735.0V792.50H749.0V791.50H763.0V790.50H779.0V789.50H795.0V788.50H811.0V787.50H827.0V786.50H843.0V785.50H862.0V784.50H881.0V783.50H900.0V782.50H919.0V781.50H940.0V780.50H962.0V779.50H985.0V778.50H1009.0V777.50H1038.0V776.50H1068.0V775.50H1098.0V774.50H1143.0V773.50H1186.0V772.50H1240.0V771.50H1508.0V772.50H1576.0V773.50H1636.0V774.50H1673.0V775.50H1735.0V776.50H1751.0V777.50H1751.0" fill="none" stroke="#e8871e" stroke-width="1" shape-rendering="crispEdges"/>
<path d="M3.0 958.50H83.0V962.50H84.0V961.50H85.0V960.50H101.0V959.50H143.0V958.50H325.0V956.50H376.0V957.50H378.0V958.50H380.0V959.50H381.0V958.50H540.0V959.50H541.0V960.50H544.0V961.50H547.0V960.50H551.0V959.50H552.0V958.50H622.0V957.50H625.0V958.50H700.0V959.50H760.0V956.50H768.0V957.50H800.0V960.50H801.0V959.50H938.0V958.50H978.0V953.50H986.0V955.50H1011.0V957.50H1014.0V958.50H1016.0V959.50H1027.0V957.50H1203.0V956.50H1335.0V955.50H1372.0V957.50H1381.0V956.50H1518.0V954.50H1590.0V956.50H1611.0V955.50H1650.0V953.50H1715.0V952.50H1751.0" fill="none" stroke="#6b2d8c" stroke-width="1" shape-rendering="crispEdges"/>
<path d="M55.5 956V960M83 957V963.5M84.4 959V962.5" stroke="#6b2d8c" stroke-width="1.3"/>
<path d="M13 957.5H16M19 957.5H21M27 957.5H52M58 957.5H62M64 959.5H66M68 957.5H71M74 957.5H76M88 961.5H92M104 959.5H108M112 960.5H115M328 955.5H331M340 955.5H352M358 955.5H366M655 959.5H660M664 959.5H672M676 959.5H680M986 954.5H990M994 954.5H1003M1340 954.5H1346M1352 954.5H1360M1364 954.5H1368M1505 955.5H1509M1376 956.5H1379" stroke="#6b2d8c" stroke-width="1"/>
<path d="M3.5 161.5H1719" stroke="#3a3a3a" stroke-width="1" stroke-dasharray="6.5 3.9"/>
<path d="M3.5 246.5H1738" stroke="#3a3a3a" stroke-width="1" stroke-dasharray="6.5 3.9"/>
<path d="M3.5 349.5H1726" stroke="#3a3a3a" stroke-width="1" stroke-dasharray="6.5 3.9"/>
<path d="M3.5 478.5H1738" stroke="#3a3a3a" stroke-width="1" stroke-dasharray="6.5 3.9"/>
<path d="M3.5 583.5H1726" stroke="#3a3a3a" stroke-width="1" stroke-dasharray="6.5 3.9"/>
<path d="M3.5 863.5H1719" stroke="#3a3a3a" stroke-width="1" stroke-dasharray="6.5 3.9"/>
<path d="M3.5 938.5H1738" stroke="#3a3a3a" stroke-width="1" stroke-dasharray="6.5 3.9"/>
<path d="M55.5 672V744" stroke="#3c3c3c" stroke-width="1.15" stroke-dasharray="5.2 5" stroke-dashoffset="2.6"/>
<path d="M10 103.4H77.4L82.6 115.5L77.4 127.9H10Q7 127.9 7 124.9V106.4Q7 103.4 10 103.4Z" fill="#e6e6e6"/>
<path d="M10 103.4H77.4L82.6 115.5L77.4 127.9H10Q7 127.9 7 124.9V106.4Q7 103.4 10 103.4ZM32.7 103.4V127.9" fill="none" stroke="#111" stroke-width="2" stroke-linejoin="round"/>
<path d="M10 220.4H77.4L82.6 232.5L77.4 244.9H10Q7 244.9 7 241.9V223.4Q7 220.4 10 220.4Z" fill="#e3f7f8"/>
<path d="M10 220.4H77.4L82.6 232.5L77.4 244.9H10Q7 244.9 7 241.9V223.4Q7 220.4 10 220.4ZM32.7 220.4V244.9" fill="none" stroke="#2bc4cc" stroke-width="2" stroke-linejoin="round"/>
<path d="M9 337.5H31L42 350.0L31 362.5H9Q6 362.5 6 359.5V340.5Q6 337.5 9 337.5Z" fill="#fde6ea" stroke="#f4788c" stroke-width="1.6" stroke-linejoin="round"/>
<path d="M10 454.09999999999997H77.4L82.6 466.29999999999995L77.4 478.79999999999995H10Q7 478.79999999999995 7 475.79999999999995V457.09999999999997Q7 454.09999999999997 10 454.09999999999997Z" fill="#eff8e3"/>
<path d="M10 454.09999999999997H77.4L82.6 466.29999999999995L77.4 478.79999999999995H10Q7 478.79999999999995 7 475.79999999999995V457.09999999999997Q7 454.09999999999997 10 454.09999999999997ZM32.7 454.09999999999997V478.79999999999995" fill="none" stroke="#85c83e" stroke-width="2" stroke-linejoin="round"/>
<path d="M9 571H31L42 583.5L31 596H9Q6 596 6 593V574Q6 571 9 571Z" fill="#fff1e2" stroke="#ffa550" stroke-width="1.6" stroke-linejoin="round"/>
<path d="M10 688.1999999999999H77.4L82.6 700.5L77.4 713.1H10Q7 713.1 7 710.1V691.1999999999999Q7 688.1999999999999 10 688.1999999999999Z" fill="#e6e6f7"/>
<path d="M10 688.1999999999999H32.7V713.1H10Q7 713.1 7 710.1V691.1999999999999Q7 688.1999999999999 10 688.1999999999999Z" fill="#2424c6"/>
<path d="M10 688.1999999999999H77.4L82.6 700.5L77.4 713.1H10Q7 713.1 7 710.1V691.1999999999999Q7 688.1999999999999 10 688.1999999999999ZM32.7 688.1999999999999V713.1" fill="none" stroke="#0a0a0a" stroke-width="2" stroke-linejoin="round"/>
<path d="M9 851H31L42 862.75L31 874.5H9Q6 874.5 6 871.5V854Q6 851 9 851Z" fill="#fff1e2" stroke="#ffa550" stroke-width="1.6" stroke-linejoin="round"/>
<path d="M9 925.5H31L42 938.0L31 950.5H9Q6 950.5 6 947.5V928.5Q6 925.5 9 925.5Z" fill="#f3e7f6" stroke="#b07cc8" stroke-width="1.6" stroke-linejoin="round"/>
<path d="M45 57.5H66L55.5 67.8Z" fill="#f7941d"/>
<path d="M46.3 644.6H64V662.6H58.8L55.3 669.6L51.8 662.6H46.3Z" fill="#000" stroke="#f7941d" stroke-width="2.2" stroke-linejoin="miter"/>
<path d="M1731 700.8L1743.3 690.6V698.7H1751V703H1743.3V710.8Z" fill="#2323b4"/>
<path d="M1712.5 64.4H1743Q1745.4 64.4 1745.4 66.8V97.5Q1745.4 100.6 1743.2 98.3L1711 67.2Q1708.8 64.4 1712.5 64.4Z" fill="#474747" stroke="#1c1c1c" stroke-width="1"/>
<circle cx="1737.5" cy="72" r="3.9" fill="none" stroke="#a6a6a6" stroke-width="1.5"/><path d="M1734.6 75L1727.6 81.4" stroke="#a6a6a6" stroke-width="2.2" stroke-linecap="round"/>
<path d="M593 36.5H586.5V53H593M1160.5 36.5H1167V53H1160.5" fill="none" stroke="#e6e6e6" stroke-width="1.2"/>
<rect x="587" y="44" width="580" height="2" fill="#b4b4b4"/>
<path d="M596 33H611.2L603.6 38.3Z" fill="#f7941d"/>
<path d="M597.6 40.9H609.4V52H605.6L603.5 56.3L601.4 52H597.6Z" fill="#000" stroke="#f7941d" stroke-width="1.6"/>
<path d="M600.6 43.6H606.4M603.5 43.6V50.2" stroke="#f7941d" stroke-width="1.8"/>
</svg>
<div style="left:1778px;top:54.4px;width:62.8px;height:36.4px;border:1px solid #6b5f59;border-radius:6px;background:linear-gradient(#3b3b3b 0%,#303030 45%,#262626 100%);box-shadow:inset 0 -2px 2px rgba(0,0,0,.45),inset 0 1px 1px rgba(255,255,255,.06);box-sizing:border-box;"></div>
<div style="left:1850px;top:54.4px;width:62.8px;height:36.4px;border:1px solid #6b5f59;border-radius:6px;background:linear-gradient(#3b3b3b 0%,#303030 45%,#262626 100%);box-shadow:inset 0 -2px 2px rgba(0,0,0,.45),inset 0 1px 1px rgba(255,255,255,.06);box-sizing:border-box;"></div>
<div style="left:1778px;top:100.3px;width:62.8px;height:36.4px;border:1px solid #6b5f59;border-radius:6px;background:linear-gradient(#3b3b3b 0%,#303030 45%,#262626 100%);box-shadow:inset 0 -2px 2px rgba(0,0,0,.45),inset 0 1px 1px rgba(255,255,255,.06);box-sizing:border-box;"></div>
<div style="left:1850px;top:100.3px;width:62.8px;height:36.4px;border:1px solid #6b5f59;border-radius:6px;background:linear-gradient(#3b3b3b 0%,#303030 45%,#262626 100%);box-shadow:inset 0 -2px 2px rgba(0,0,0,.45),inset 0 1px 1px rgba(255,255,255,.06);box-sizing:border-box;"></div>
<div style="left:1778px;top:146.2px;width:62.8px;height:36.4px;border:1px solid #6b5f59;border-radius:6px;background:linear-gradient(#3b3b3b 0%,#303030 45%,#262626 100%);box-shadow:inset 0 -2px 2px rgba(0,0,0,.45),inset 0 1px 1px rgba(255,255,255,.06);box-sizing:border-box;"></div>
<div style="left:1850px;top:146.2px;width:62.8px;height:36.4px;border:1px solid #6b5f59;border-radius:6px;background:linear-gradient(#3b3b3b 0%,#303030 45%,#262626 100%);box-shadow:inset 0 -2px 2px rgba(0,0,0,.45),inset 0 1px 1px rgba(255,255,255,.06);box-sizing:border-box;"></div>
<div style="left:1778px;top:196.3px;width:62.8px;height:36.4px;border:1px solid #6b5f59;border-radius:6px;background:linear-gradient(#3b3b3b 0%,#303030 45%,#262626 100%);box-shadow:inset 0 -2px 2px rgba(0,0,0,.45),inset 0 1px 1px rgba(255,255,255,.06);box-sizing:border-box;"></div>
<div style="left:1850px;top:196.3px;width:62.8px;height:36.4px;border:1px solid #6b5f59;border-radius:6px;background:linear-gradient(#3b3b3b 0%,#303030 45%,#262626 100%);box-shadow:inset 0 -2px 2px rgba(0,0,0,.45),inset 0 1px 1px rgba(255,255,255,.06);box-sizing:border-box;"></div>
<div style="left:1773px;top:189px;width:143px;height:1px;background:#5e544e;"></div>
<div style="left:1773px;top:241px;width:143px;height:1px;background:#5e544e;"></div>
<div style="left:3px;top:984.2px;width:90px;height:19px;background:#1e1e1e;border-radius:5px 5px 0 0;"></div>
<div style="left:3px;top:1003.2px;width:90px;height:2px;background:#8a8a8a;"></div>
<div style="left:3px;top:1005.2px;width:90px;height:16.6px;background:#fe0000;"></div>
<div style="left:3px;top:1021.8px;width:90px;height:56.4px;background:#c9c9c9;border-radius:0 0 5px 5px;"></div>
<svg style="position:absolute;left:3px;top:1005.6px" width="16" height="16" viewBox="0 0 16 16"><path d="M7.8 1.2L15.2 14.7H0.4Z" fill="#ffef00" stroke="#3a3a6a" stroke-width="0.9" stroke-linejoin="round"/><path d="M7.8 5V10.6M7.8 12V13.4" stroke="#777" stroke-width="1.5"/></svg>
<div style="left:98px;top:984.2px;width:90px;height:19px;background:#1e4044;border-radius:5px 5px 0 0;"></div>
<div style="left:98px;top:1003.2px;width:90px;height:2px;background:#8a8a8a;"></div>
<div style="left:98px;top:1005.2px;width:90px;height:16.6px;background:#fe0000;"></div>
<div style="left:98px;top:1021.8px;width:90px;height:56.4px;background:#c9c9c9;border-radius:0 0 5px 5px;"></div>
<svg style="position:absolute;left:98px;top:1005.6px" width="16" height="16" viewBox="0 0 16 16"><path d="M7.8 1.2L15.2 14.7H0.4Z" fill="#ffef00" stroke="#3a3a6a" stroke-width="0.9" stroke-linejoin="round"/><path d="M7.8 5V10.6M7.8 12V13.4" stroke="#777" stroke-width="1.5"/></svg>
<div style="left:193px;top:984.2px;width:90px;height:19px;background:#46262b;border-radius:5px 5px 0 0;"></div>
<div style="left:193px;top:1003.2px;width:90px;height:2px;background:#8a8a8a;"></div>
<div style="left:193px;top:1005.2px;width:90px;height:16.6px;background:#fe0000;"></div>
<div style="left:193px;top:1021.8px;width:90px;height:56.4px;background:#c9c9c9;border-radius:0 0 5px 5px;"></div>
<svg style="position:absolute;left:193px;top:1005.6px" width="16" height="16" viewBox="0 0 16 16"><path d="M7.8 1.2L15.2 14.7H0.4Z" fill="#ffef00" stroke="#3a3a6a" stroke-width="0.9" stroke-linejoin="round"/><path d="M7.8 5V10.6M7.8 12V13.4" stroke="#777" stroke-width="1.5"/></svg>
<div style="left:288px;top:1003.2px;width:90px;height:18.6px;background:#3b4526;border-radius:4px 4px 0 0;"></div>
<div style="left:288px;top:1021.8px;width:90px;height:56.4px;background:#c9c9c9;border-radius:0 0 5px 5px;"></div>
<div style="left:383px;top:1003.2px;width:90px;height:18.6px;background:#4a3421;border-radius:4px 4px 0 0;"></div>
<div style="left:383px;top:1021.8px;width:90px;height:56.4px;background:#c9c9c9;border-radius:0 0 5px 5px;"></div>
<div style="left:478px;top:984.2px;width:90px;height:19px;background:#2626be;border-radius:5px 5px 0 0;"></div>
<div style="left:478px;top:1003.2px;width:90px;height:2px;background:#8a8a8a;"></div>
<div style="left:478px;top:1005.2px;width:90px;height:16.6px;background:#fe0000;"></div>
<div style="left:478px;top:1021.8px;width:90px;height:56.4px;background:#c9c9c9;border-radius:0 0 5px 5px;"></div>
<svg style="position:absolute;left:478px;top:1005.6px" width="16" height="16" viewBox="0 0 16 16"><path d="M7.8 1.2L15.2 14.7H0.4Z" fill="#ffef00" stroke="#3a3a6a" stroke-width="0.9" stroke-linejoin="round"/><path d="M7.8 5V10.6M7.8 12V13.4" stroke="#777" stroke-width="1.5"/></svg>
<div style="left:573px;top:1003.2px;width:90px;height:18.6px;background:#4a3421;border-radius:4px 4px 0 0;"></div>
<div style="left:573px;top:1021.8px;width:90px;height:56.4px;background:#c9c9c9;border-radius:0 0 5px 5px;"></div>
<div style="left:668px;top:1003.2px;width:90px;height:18.6px;background:#2c2232;border-radius:4px 4px 0 0;"></div>
<div style="left:668px;top:1021.8px;width:90px;height:56.4px;background:#c9c9c9;border-radius:0 0 5px 5px;"></div>
<div style="left:1118.5px;top:1000px;width:1px;height:80px;background:#5e544e;"></div>
<div style="left:1269px;top:1000px;width:1px;height:80px;background:#5e544e;"></div>
<div style="left:1128.8px;top:999px;width:40px;height:80px;border:1px solid #6b5f59;border-radius:7px;background:linear-gradient(#3a3a3a 0%,#2e2e2e 50%,#232323 100%);box-shadow:inset 0 -2px 2px rgba(0,0,0,.4);box-sizing:border-box;"></div>
<div style="left:1133.1px;top:1007px;width:31.4px;height:2px;background:#c8202c;"></div>
<div style="left:1174px;top:999px;width:40px;height:80px;border:1px solid #6b5f59;border-radius:7px;background:linear-gradient(#3a3a3a 0%,#2e2e2e 50%,#232323 100%);box-shadow:inset 0 -2px 2px rgba(0,0,0,.4);box-sizing:border-box;"></div>
<div style="left:1178.3px;top:1007px;width:31.4px;height:2px;background:#c8c8e0;"></div>
<div style="left:1219px;top:999px;width:40px;height:80px;border:1px solid #6b5f59;border-radius:7px;background:linear-gradient(#3a3a3a 0%,#2e2e2e 50%,#232323 100%);box-shadow:inset 0 -2px 2px rgba(0,0,0,.4);box-sizing:border-box;"></div>
<div style="left:1223.3px;top:1007px;width:31.4px;height:2px;background:#c060f0;"></div>
<div style="left:1280.4px;top:1003.8px;width:199.3px;height:19.2px;background:#58585a;border-radius:5px 5px 0 0;box-shadow:0 0 0 1px #1a1a1a;"></div>
<div style="left:1280.4px;top:1023px;width:199.3px;height:55.2px;background:#c9c9c9;border-radius:0 0 5px 5px;box-shadow:0 0 0 1px #1a1a1a;"></div>
<div style="left:1280.4px;top:1022.5px;width:199.3px;height:1.5px;background:#7a7a7a;"></div>
<svg style="position:absolute;left:1390px;top:1062px" width="12" height="14" viewBox="0 0 12 14"><path d="M1.2 1.2H9.8V8.6H7.2L5.5 11.8L3.8 8.6H1.2Z" fill="#000" stroke="#f7941d" stroke-width="1.3"/><path d="M3.4 3.2H7.6M5.5 3.2V7.4" stroke="#fff" stroke-width="1.3"/></svg>
<div style="left:1485.7px;top:1003.8px;width:158.8px;height:19.2px;background:#58585a;border-radius:5px 5px 0 0;box-shadow:0 0 0 1px #1a1a1a;"></div>
<div style="left:1485.7px;top:1023px;width:158.8px;height:55.2px;background:#c9c9c9;border-radius:0 0 5px 5px;box-shadow:0 0 0 1px #1a1a1a;"></div>
<div style="left:1485.7px;top:1022.5px;width:158.8px;height:1.5px;background:#7a7a7a;"></div>
<div style="left:1490.3px;top:1025.6px;width:29.3px;height:15.2px;background:#2626c0;border:1px solid #0a0a0a;border-radius:5px;box-sizing:border-box;"></div>
<svg style="position:absolute;left:1528px;top:1024px" width="22" height="16" viewBox="0 0 22 16"><path d="M2 13.4H7.2L13.4 3.6H18.6" fill="none" stroke="#4a4ab0" stroke-width="1.2"/></svg>
<div style="left:1650.7px;top:1003.8px;width:148.5px;height:19.2px;background:#58585a;border-radius:5px 5px 0 0;box-shadow:0 0 0 1px #1a1a1a;"></div>
<div style="left:1650.7px;top:1023px;width:148.5px;height:55.2px;background:#c9c9c9;border-radius:0 0 5px 5px;box-shadow:0 0 0 1px #1a1a1a;"></div>
<div style="left:1650.7px;top:1022.5px;width:148.5px;height:1.5px;background:#7a7a7a;"></div>
<div style="left:1811.3px;top:1000px;width:1px;height:80px;background:#5e544e;"></div>
<div style="left:1822px;top:999.1px;width:90px;height:35.8px;background:#ff1f2a;border:1px solid #7a6a66;border-radius:7px;box-sizing:border-box;"></div>
<div style="left:1822.1px;top:1040.7px;width:89.4px;height:38px;background:#c9c9c9;border-radius:6px;"></div>
<div style="left:1759.8px;top:501.7px;width:4px;height:4px;background:#bdbdbd;border-radius:50%;"></div>
<div style="left:1759.8px;top:510.5px;width:4px;height:4px;background:#bdbdbd;border-radius:50%;"></div>
<div style="left:1759.8px;top:519.2px;width:4px;height:4px;background:#bdbdbd;border-radius:50%;"></div>

<span class="t" style="left:10.54px;top:110.10px;font-size:11px;color:#222;letter-spacing:-0.034px;">C 1</span>
<span class="t" style="left:44.78px;top:110.10px;font-size:11px;color:#222;">20 V</span>
<span class="t" style="left:10.54px;top:227.10px;font-size:11px;color:#111;letter-spacing:-0.034px;">C 2</span>
<span class="t" style="left:35.43px;top:227.10px;font-size:11px;color:#111;">300 mV</span>
<span class="t" style="left:13.84px;top:344.60px;font-size:11px;color:#f0607a;letter-spacing:-0.034px;">C 3</span>
<span class="t" style="left:10.54px;top:460.90px;font-size:11px;color:#111;letter-spacing:-0.034px;">C 4</span>
<span class="t" style="left:35.43px;top:460.90px;font-size:11px;color:#111;">200 mV</span>
<span class="t" style="left:13.84px;top:578.10px;font-size:11px;color:#111;letter-spacing:-0.034px;">C 5</span>
<span class="t" style="left:10.54px;top:695.10px;font-size:11px;color:#fff;letter-spacing:-0.034px;">C 6</span>
<span class="t" style="left:48.28px;top:695.10px;font-size:11px;color:#2c2cc4;">3 V</span>
<span class="t" style="left:12.14px;top:857.40px;font-size:11px;color:#111;letter-spacing:0.410px;">M 1</span>
<span class="t" style="left:12.14px;top:932.60px;font-size:11px;color:#8c52a8;letter-spacing:0.410px;">M 2</span>
<span class="t" style="left:50.63px;top:647.90px;font-size:13.4px;color:#f7941d;font-weight:700;">T</span>
<span class="t" style="left:19.13px;top:6.75px;font-size:14.5px;color:#f2f2f2;letter-spacing:0.991px;">File</span>
<span class="t" style="left:85.43px;top:6.75px;font-size:14.5px;color:#f2f2f2;letter-spacing:0.782px;">Edit</span>
<span class="t" style="left:154.13px;top:6.75px;font-size:14.5px;color:#f2f2f2;letter-spacing:0.681px;">Utility</span>
<span class="t" style="left:240.13px;top:6.75px;font-size:14.5px;color:#f2f2f2;letter-spacing:0.893px;">Help</span>
<span class="t" style="left:15.41px;top:37.75px;font-size:14.8px;color:#e4e4e4;letter-spacing:0.987px;">Waveform View</span>
<span class="t" style="left:1784.74px;top:0.60px;font-size:29.3px;color:#fff;letter-spacing:-1.336px;font-weight:700;font-family:'Liberation Sans','DejaVu Sans',sans-serif;-webkit-text-stroke:0.7px #fff;">Tektronix</span>
<span class="t" style="left:1802.15px;top:31.75px;font-size:14.2px;color:#ececec;letter-spacing:-0.156px;font-weight:700;">Add New...</span>
<span class="t" style="left:1784.14px;top:64.50px;font-size:14.4px;color:#f2f2f2;letter-spacing:-0.514px;">Cursors</span>
<span class="t" style="left:1855.64px;top:64.50px;font-size:14.4px;color:#f2f2f2;letter-spacing:0.048px;">Callout</span>
<span class="t" style="left:1779.54px;top:110.50px;font-size:14.4px;color:#f2f2f2;letter-spacing:-0.191px;">Measure</span>
<span class="t" style="left:1857.64px;top:110.50px;font-size:14.4px;color:#f2f2f2;letter-spacing:-0.505px;">Search</span>
<span class="t" style="left:1784.64px;top:148.20px;font-size:14.4px;color:#f2f2f2;letter-spacing:-0.457px;">Results</span>
<span class="t" style="left:1790.64px;top:164.40px;font-size:14.4px;color:#f2f2f2;letter-spacing:0.177px;">Table</span>
<span class="t" style="left:1866.94px;top:156.70px;font-size:14.4px;color:#f2f2f2;letter-spacing:0.601px;">Plot</span>
<span class="t" style="left:1855.64px;top:206.80px;font-size:14.4px;color:#f2f2f2;letter-spacing:0.387px;">More...</span>
<span class="t" style="left:8.08px;top:986.70px;font-size:13.6px;color:#f5e63c;letter-spacing:-1.115px;word-spacing:1.5px;-webkit-text-stroke:0.35px;">Ch 1</span>
<span class="t" style="left:18.95px;top:1005.50px;font-size:14.2px;color:#fff;letter-spacing:0.108px;">Clipping</span>
<span class="t" style="left:8.08px;top:1025.50px;font-size:13.6px;color:#111;letter-spacing:-0.450px;">5 V/div</span>
<span class="t" style="left:8.08px;top:1044.60px;font-size:13.6px;color:#111;letter-spacing:-0.450px;">1 MΩ</span>
<span class="t" style="left:8.08px;top:1063.50px;font-size:13.6px;color:#111;letter-spacing:-0.450px;">200 kHz</span>
<span class="t" style="left:74.51px;top:1061.80px;font-size:8.2px;color:#111;">B</span>
<span class="t" style="left:79.71px;top:1064.60px;font-size:8.2px;color:#111;">w</span>
<span class="t" style="left:103.08px;top:986.70px;font-size:13.6px;color:#2fd0dc;letter-spacing:-1.115px;word-spacing:1.5px;-webkit-text-stroke:0.35px;">Ch 2</span>
<span class="t" style="left:113.95px;top:1005.50px;font-size:14.2px;color:#fff;letter-spacing:0.108px;">Clipping</span>
<span class="t" style="left:103.08px;top:1025.50px;font-size:13.6px;color:#111;letter-spacing:-0.450px;">250 mV/div</span>
<span class="t" style="left:103.08px;top:1044.60px;font-size:13.6px;color:#111;letter-spacing:-0.450px;">1 MΩ</span>
<span class="t" style="left:103.08px;top:1063.50px;font-size:13.6px;color:#111;letter-spacing:-0.450px;">200 kHz</span>
<span class="t" style="left:169.51px;top:1061.80px;font-size:8.2px;color:#111;">B</span>
<span class="t" style="left:174.71px;top:1064.60px;font-size:8.2px;color:#111;">w</span>
<span class="t" style="left:198.08px;top:986.70px;font-size:13.6px;color:#fbeef0;letter-spacing:-1.115px;word-spacing:1.5px;-webkit-text-stroke:0.35px;">Ch 3</span>
<span class="t" style="left:208.95px;top:1005.50px;font-size:14.2px;color:#fff;letter-spacing:0.108px;">Clipping</span>
<span class="t" style="left:198.08px;top:1025.50px;font-size:13.6px;color:#111;letter-spacing:-0.450px;">450 mV/div</span>
<span class="t" style="left:198.08px;top:1044.60px;font-size:13.6px;color:#111;letter-spacing:-0.450px;">1 MΩ</span>
<span class="t" style="left:198.08px;top:1063.50px;font-size:13.6px;color:#111;letter-spacing:-0.450px;">200 kHz</span>
<span class="t" style="left:264.51px;top:1061.80px;font-size:8.2px;color:#111;">B</span>
<span class="t" style="left:269.71px;top:1064.60px;font-size:8.2px;color:#111;">w</span>
<span class="t" style="left:293.08px;top:1005.80px;font-size:13.6px;color:#8ed435;letter-spacing:-1.115px;word-spacing:1.5px;-webkit-text-stroke:0.35px;">Ch 4</span>
<span class="t" style="left:293.08px;top:1025.50px;font-size:13.6px;color:#111;letter-spacing:-0.450px;">200 mV/div</span>
<span class="t" style="left:293.08px;top:1044.60px;font-size:13.6px;color:#111;letter-spacing:-0.450px;">1 MΩ</span>
<span class="t" style="left:293.08px;top:1063.50px;font-size:13.6px;color:#111;letter-spacing:-0.450px;">200 kHz</span>
<span class="t" style="left:359.51px;top:1061.80px;font-size:8.2px;color:#111;">B</span>
<span class="t" style="left:364.71px;top:1064.60px;font-size:8.2px;color:#111;">w</span>
<span class="t" style="left:388.08px;top:1005.80px;font-size:13.6px;color:#ff9a33;letter-spacing:-1.115px;word-spacing:1.5px;-webkit-text-stroke:0.35px;">Ch 5</span>
<span class="t" style="left:388.08px;top:1025.50px;font-size:13.6px;color:#111;letter-spacing:-0.450px;">1 V/div</span>
<span class="t" style="left:388.08px;top:1044.60px;font-size:13.6px;color:#111;letter-spacing:-0.450px;">1 MΩ</span>
<span class="t" style="left:388.08px;top:1063.50px;font-size:13.6px;color:#111;letter-spacing:-0.450px;">200 kHz</span>
<span class="t" style="left:454.51px;top:1061.80px;font-size:8.2px;color:#111;">B</span>
<span class="t" style="left:459.71px;top:1064.60px;font-size:8.2px;color:#111;">w</span>
<span class="t" style="left:483.08px;top:986.70px;font-size:13.6px;color:#fff;letter-spacing:-1.115px;word-spacing:1.5px;-webkit-text-stroke:0.35px;">Ch 6</span>
<span class="t" style="left:493.95px;top:1005.50px;font-size:14.2px;color:#fff;letter-spacing:0.108px;">Clipping</span>
<span class="t" style="left:483.08px;top:1025.50px;font-size:13.6px;color:#111;letter-spacing:-0.450px;">750 mV/div</span>
<span class="t" style="left:483.08px;top:1044.60px;font-size:13.6px;color:#111;letter-spacing:-0.450px;">1 MΩ</span>
<span class="t" style="left:483.08px;top:1063.50px;font-size:13.6px;color:#111;letter-spacing:-0.450px;">200 kHz</span>
<span class="t" style="left:549.51px;top:1061.80px;font-size:8.2px;color:#111;">B</span>
<span class="t" style="left:554.71px;top:1064.60px;font-size:8.2px;color:#111;">w</span>
<span class="t" style="left:578.08px;top:1005.80px;font-size:13.6px;color:#ff9a33;letter-spacing:0.230px;word-spacing:1.5px;-webkit-text-stroke:0.35px;">Math 1</span>
<span class="t" style="left:578.08px;top:1025.50px;font-size:13.6px;color:#111;letter-spacing:-0.731px;font-weight:700;">73.0 mT/div</span>
<span class="t" style="left:578.08px;top:1044.60px;font-size:13.6px;color:#111;letter-spacing:-0.450px;">Intg(Ch2)…</span>
<span class="t" style="left:673.08px;top:1005.80px;font-size:13.6px;color:#fff;letter-spacing:0.230px;word-spacing:1.5px;-webkit-text-stroke:0.35px;">Math 2</span>
<span class="t" style="left:673.08px;top:1025.50px;font-size:13.6px;color:#111;letter-spacing:-0.405px;font-weight:700;">47.465 A/…</span>
<span class="t" style="left:673.08px;top:1044.60px;font-size:13.6px;color:#111;letter-spacing:-0.450px;">-Intg(Ch3…</span>
<span class="t" style="left:1134.70px;top:1020.40px;font-size:15.2px;color:#f2f2f2;letter-spacing:-0.600px;">Add</span>
<span class="t" style="left:1132.83px;top:1036.60px;font-size:15.2px;color:#f2f2f2;letter-spacing:-0.600px;">New</span>
<span class="t" style="left:1130.70px;top:1052.60px;font-size:15.2px;color:#f2f2f2;letter-spacing:-0.600px;">Math</span>
<span class="t" style="left:1179.90px;top:1020.40px;font-size:15.2px;color:#f2f2f2;letter-spacing:-0.600px;">Add</span>
<span class="t" style="left:1178.03px;top:1036.60px;font-size:15.2px;color:#f2f2f2;letter-spacing:-0.600px;">New</span>
<span class="t" style="left:1182.32px;top:1052.60px;font-size:15.2px;color:#f2f2f2;letter-spacing:-0.600px;">Ref</span>
<span class="t" style="left:1224.90px;top:1020.40px;font-size:15.2px;color:#f2f2f2;letter-spacing:-0.600px;">Add</span>
<span class="t" style="left:1223.03px;top:1036.60px;font-size:15.2px;color:#f2f2f2;letter-spacing:-0.600px;">New</span>
<span class="t" style="left:1225.62px;top:1052.60px;font-size:15.2px;color:#f2f2f2;letter-spacing:-0.600px;">Bus</span>
<span class="t" style="left:1285.12px;top:1006.10px;font-size:14.6px;color:#f2f2f2;">Horizontal</span>
<span class="t" style="left:1285.18px;top:1026.00px;font-size:13.6px;color:#111;letter-spacing:-0.450px;">4 ms/div</span>
<span class="t" style="left:1285.18px;top:1044.60px;font-size:13.6px;color:#111;letter-spacing:-0.450px;">SR: 1 MS/s</span>
<span class="t" style="left:1285.18px;top:1063.40px;font-size:13.6px;color:#111;letter-spacing:-0.450px;">RL: 40 kpts</span>
<span class="t" style="left:1390.18px;top:1026.00px;font-size:13.6px;color:#111;letter-spacing:-0.450px;">40 ms</span>
<span class="t" style="left:1390.68px;top:1044.60px;font-size:13.6px;color:#111;letter-spacing:-0.450px;">1 µs/pt</span>
<span class="t" style="left:1404.68px;top:1063.40px;font-size:13.6px;color:#111;letter-spacing:-0.450px;">3%</span>
<span class="t" style="left:1490.42px;top:1006.10px;font-size:14.6px;color:#f2f2f2;">Trigger</span>
<span class="t" style="left:1500.67px;top:1026.30px;font-size:13.6px;color:#fff;">6</span>
<span class="t" style="left:1555.68px;top:1026.20px;font-size:13.6px;color:#111;letter-spacing:-0.450px;">3 V</span>
<span class="t" style="left:1655.42px;top:1006.10px;font-size:14.6px;color:#f2f2f2;">Acquisition</span>
<span class="t" style="left:1654.68px;top:1026.00px;font-size:13.6px;color:#111;letter-spacing:-0.450px;">Manual,</span>
<span class="t" style="left:1735.68px;top:1026.00px;font-size:13.6px;color:#111;letter-spacing:-0.450px;">Analyze</span>
<span class="t" style="left:1654.68px;top:1044.60px;font-size:13.6px;color:#111;letter-spacing:-0.450px;">High Res: 16 bits</span>
<span class="t" style="left:1654.68px;top:1063.40px;font-size:13.6px;color:#111;letter-spacing:-0.450px;">Single: 1 /1</span>
<span class="t" style="left:1838.51px;top:1009.00px;font-size:13.2px;color:#fff;letter-spacing:-0.843px;font-weight:700;">Stopped</span>
<span class="t" style="left:1825.43px;top:1042.40px;font-size:14.2px;color:#111;letter-spacing:-0.500px;">24 Apr 2025</span>
<span class="t" style="left:1829.05px;top:1060.00px;font-size:14.2px;color:#111;letter-spacing:-0.500px;">4:53:43 PM</span>
<svg class="layer" width="1920" height="1080" viewBox="0 0 1920 1080">
<rect x="1797.8" y="202.6" width="22.4" height="19.4" fill="none" stroke="#b8b8b8" stroke-width="1.6" stroke-dasharray="3.2 2.2"/>
<circle cx="1810.6" cy="210.2" r="4.3" fill="none" stroke="#b8b8b8" stroke-width="1.5"/><path d="M1807.4 213.4L1802.6 217.4" stroke="#b8b8b8" stroke-width="2.2" stroke-linecap="round"/>
<path d="M1816.2 216.6L1824.2 221.2L1821 222.2L1822.8 225.8L1821.2 226.6L1819.4 223L1817.2 225.2Z" fill="#b8b8b8"/>
<path d="M1815.4 25.6L1825.4 9.4H1830.6L1820.6 25.6Z" fill="#1fb4d9"/>
</svg>
</div></body></html>
